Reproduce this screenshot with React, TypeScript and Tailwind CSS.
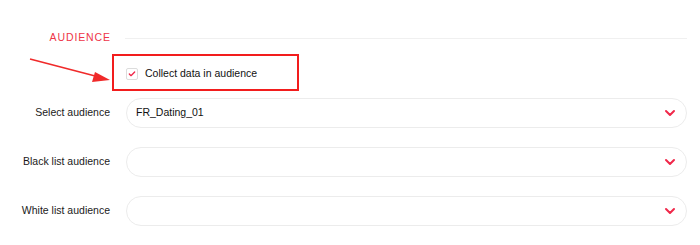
import { ChevronDown, Check } from 'lucide-react'

const font = { fontFamily: '"Liberation Sans", Arial, sans-serif' }

function SelectRow({ label, value }: { label: string; value?: string }) {
    return (
        <div className="flex items-center h-[30px]">
            <div className="w-[111px] shrink-0 text-right text-[10.5px] text-[#1a1a1a] pr-[1px]">{label}</div>
            <div className="ml-[15px] flex-1 h-[30px] rounded-full border border-[#ececec] bg-white flex items-center pl-[9px] pr-[8px]">
                <span className="flex-1 text-[10.5px] text-[#111]">{value}</span>
                <ChevronDown size={16} strokeWidth={3} className="text-[#f0284a]" />
            </div>
        </div>
    )
}

export default function App() {
    return (
        <div className="relative w-[700px] h-[245px] bg-white overflow-hidden" style={font}>
            <div className="pt-[32px] pr-[13px]">
                <div className="flex items-center">
                    <div className="w-[111px] shrink-0 text-right text-[10.5px] tracking-[0.9px] text-[#ee3548] leading-[11px]">AUDIENCE</div>
                    <div className="ml-[14px] flex-1 h-px bg-[#f0f0f0] mt-[2px]" />
                </div>

                <div className="ml-[112px] mt-[11px] w-[187px] h-[37px] border-2 border-[#f21d1d] flex items-center pl-[12px] pt-[3px]">
                    <div className="w-[12px] h-[12px] rounded-[2px] border border-[#dcdcdc] flex items-center justify-center">
                        <Check size={8} strokeWidth={4} className="text-[#f0284a]" />
                    </div>
                    <span className="ml-[7px] text-[10.5px] text-[#111]">Collect data in audience</span>
                </div>

                <div className="mt-[7px] flex flex-col gap-[19px]">
                    <SelectRow label="Select audience" value="FR_Dating_01" />
                    <SelectRow label="Black list audience" />
                    <SelectRow label="White list audience" />
                </div>
            </div>

            <svg className="absolute left-0 top-0" width="700" height="245">
                <line x1="30" y1="59" x2="99" y2="77" stroke="#f02a2a" strokeWidth="1.6" />
                <polygon points="110,80 95,72 92,82" fill="#f02a2a" />
            </svg>
        </div>
    )
}
